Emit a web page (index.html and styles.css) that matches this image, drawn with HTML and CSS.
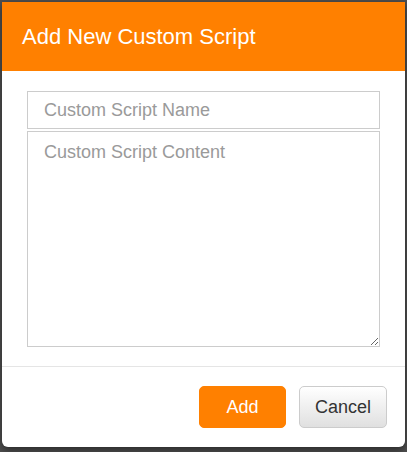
FILE: index.html
```html
<!DOCTYPE html>
<html>
<head>
<meta charset="utf-8">
<link rel="stylesheet" href="styles.css">
</head>
<body>
<div class="modal">
  <div class="modal-header">
    <h2 class="modal-title">Add New Custom Script</h2>
  </div>
  <div class="modal-body">
    <input class="field" type="text" placeholder="Custom Script Name">
    <textarea class="field area" placeholder="Custom Script Content"></textarea>
  </div>
  <div class="modal-footer">
    <button class="btn btn-primary">Add</button>
    <button class="btn btn-default">Cancel</button>
  </div>
</div>
</body>
</html>
```
FILE: styles.css
```css
html, body {
  margin: 0;
  padding: 0;
}
body {
  background: #4f4f4f;
  width: 407px;
  height: 452px;
  overflow: hidden;
  font-family: "Liberation Sans", Arial, sans-serif;
}
.modal {
  margin: 2px 0 0 2px;
  width: 403px;
  height: 445px;
  background: #fff;
  border-radius: 0 0 6px 6px;
  box-shadow: 0 3px 9px rgba(0,0,0,0.5);
  display: flex;
  flex-direction: column;
  box-sizing: border-box;
}
.modal-header {
  background: #ff8000;
  height: 69px;
  display: flex;
  align-items: center;
  padding-left: 20px;
  flex: none;
}
.modal-title {
  margin: 0;
  color: #fff;
  font-weight: normal;
  font-size: 22px;
}
.modal-body {
  padding: 20px 25px 19px 25px;
  display: flex;
  flex-direction: column;
  gap: 2px;
}
.field {
  box-sizing: border-box;
  width: 353px;
  margin: 0;
  border: 1px solid #ccc;
  border-radius: 0;
  font-family: "Liberation Sans", Arial, sans-serif;
  font-size: 18px;
  color: #333;
  outline: none;
}
.field::placeholder {
  color: #9a9a9a;
}
input.field {
  height: 38px;
  padding: 0 16px;
}
.area {
  height: 216px;
  padding: 10px 16px;
  resize: vertical;
}
.modal-footer {
  border-top: 1px solid #e5e5e5;
  padding: 19px 18px 0 0;
  display: flex;
  justify-content: flex-end;
  gap: 13px;
}
.btn {
  height: 42px;
  border-radius: 5px;
  font-family: "Liberation Sans", Arial, sans-serif;
  font-size: 18px;
  padding: 0;
  cursor: pointer;
}
.btn-primary {
  width: 87px;
  background: #ff8000;
  border: 1px solid #ff8000;
  color: #fff;
}
.btn-default {
  width: 88px;
  background: linear-gradient(#ffffff, #e0e0e0);
  border: 1px solid #ccc;
  color: #333;
}
```
